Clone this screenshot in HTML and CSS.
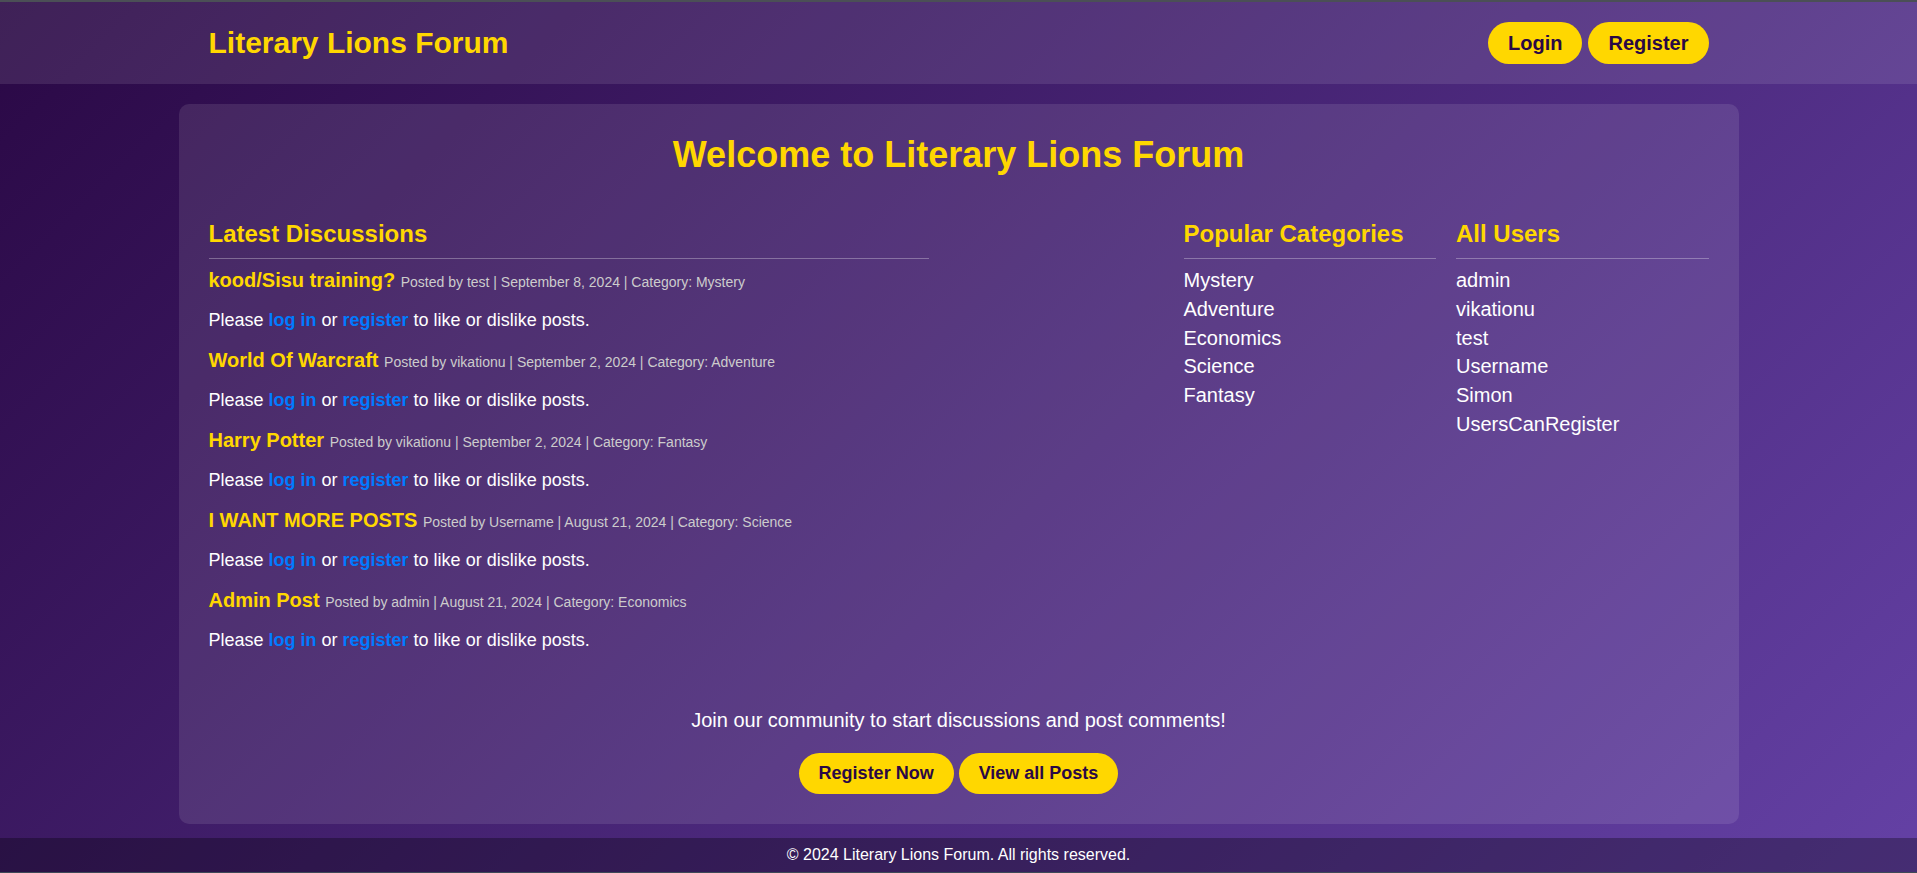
FILE: index.html
```html
<!DOCTYPE html>
<html lang="en">
<head>
<meta charset="utf-8">
<title>Literary Lions Forum</title>
<link rel="stylesheet" href="styles.css">
</head>
<body>
<header class="site-header">
  <div class="header-inner">
    <h1 class="logo">Literary Lions Forum</h1>
    <nav class="auth">
      <a class="btn btn-header" href="#">Login</a>
      <a class="btn btn-header" href="#">Register</a>
    </nav>
  </div>
</header>

<main class="card">
  <h1 class="welcome">Welcome to Literary Lions Forum</h1>

  <div class="columns">
    <section class="latest">
      <h2 class="section-title">Latest Discussions</h2>

      <div class="post">
        <h3 class="post-title">kood/Sisu training? <span class="meta">Posted by test | September 8, 2024 | Category: Mystery</span></h3>
        <p class="post-note">Please <a href="#">log in</a> or <a href="#">register</a> to like or dislike posts.</p>
      </div>
      <div class="post">
        <h3 class="post-title">World Of Warcraft <span class="meta">Posted by vikationu | September 2, 2024 | Category: Adventure</span></h3>
        <p class="post-note">Please <a href="#">log in</a> or <a href="#">register</a> to like or dislike posts.</p>
      </div>
      <div class="post">
        <h3 class="post-title">Harry Potter <span class="meta">Posted by vikationu | September 2, 2024 | Category: Fantasy</span></h3>
        <p class="post-note">Please <a href="#">log in</a> or <a href="#">register</a> to like or dislike posts.</p>
      </div>
      <div class="post">
        <h3 class="post-title">I WANT MORE POSTS <span class="meta">Posted by Username | August 21, 2024 | Category: Science</span></h3>
        <p class="post-note">Please <a href="#">log in</a> or <a href="#">register</a> to like or dislike posts.</p>
      </div>
      <div class="post">
        <h3 class="post-title">Admin Post <span class="meta">Posted by admin | August 21, 2024 | Category: Economics</span></h3>
        <p class="post-note">Please <a href="#">log in</a> or <a href="#">register</a> to like or dislike posts.</p>
      </div>
    </section>

    <div class="sidebar">
      <section class="side-col">
        <h2 class="section-title">Popular Categories</h2>
        <ul class="plain-list">
          <li>Mystery</li>
          <li>Adventure</li>
          <li>Economics</li>
          <li>Science</li>
          <li>Fantasy</li>
        </ul>
      </section>
      <section class="side-col">
        <h2 class="section-title">All Users</h2>
        <ul class="plain-list">
          <li>admin</li>
          <li>vikationu</li>
          <li>test</li>
          <li>Username</li>
          <li>Simon</li>
          <li>UsersCanRegister</li>
        </ul>
      </section>
    </div>
  </div>

  <div class="cta">
    <p class="cta-text">Join our community to start discussions and post comments!</p>
    <div class="cta-buttons">
      <a class="btn btn-cta" href="#">Register Now</a>
      <a class="btn btn-cta" href="#">View all Posts</a>
    </div>
  </div>
</main>

<footer class="site-footer">
  <p>&copy; 2024 Literary Lions Forum. All rights reserved.</p>
</footer>
</body>
</html>
```

FILE: styles.css
```css
* {
  box-sizing: border-box;
}

html {
  background: #4b4f56;
}

body {
  margin: 0;
  border-top: 2px solid #4b4f56;
  min-height: 100vh;
  font-family: "Liberation Sans", Arial, sans-serif;
  color: #ffffff;
  background: linear-gradient(135deg, #2a0845 0%, #6441a5 100%);
}

a {
  text-decoration: none;
}

/* Header */
.site-header {
  background: rgba(255, 255, 255, 0.1);
  padding: 20px 0;
}

.header-inner {
  max-width: 1500px;
  margin: 0 auto;
  display: flex;
  justify-content: space-between;
  align-items: center;
}

.logo {
  margin: 0;
  font-size: 30px;
  font-weight: bold;
  color: #ffd700;
}

.auth {
  display: flex;
  gap: 6px;
}

.btn {
  display: inline-block;
  background: #ffd700;
  color: #2a0845;
  font-weight: bold;
  border-radius: 25px;
  line-height: normal;
}

.btn-header {
  font-size: 20px;
  padding: 9.5px 20px;
}

.btn-cta {
  font-size: 18px;
  padding: 9.8px 20px;
}

/* Main card */
.card {
  max-width: 1560px;
  margin: 20px auto 14px;
  padding: 30px;
  background: rgba(255, 255, 255, 0.1);
  border-radius: 10px;
}

.welcome {
  margin: 0 0 44px;
  text-align: center;
  font-size: 36px;
  color: #ffd700;
}

.columns {
  display: flex;
  justify-content: space-between;
  align-items: flex-start;
}

.latest {
  width: 48%;
}

.sidebar {
  width: 35%;
  display: flex;
  gap: 20px;
}

.side-col {
  flex: 1;
}

.section-title {
  margin: 0 0 10px;
  padding-bottom: 10px;
  border-bottom: 1px solid rgba(255, 255, 255, 0.3);
  font-size: 24px;
  color: #ffd700;
}

.post + .post {
  margin-top: 18px;
}

.post-title {
  margin: 0;
  font-size: 20px;
  color: #ffd700;
}

.meta {
  font-size: 14px;
  font-weight: normal;
  color: #cccccc;
}

.post-note {
  margin: 18px 0 0;
  font-size: 18px;
  color: #ffffff;
}

.post-note a {
  color: #007bff;
  font-weight: bold;
}

.plain-list {
  list-style: none;
  margin: 0;
  padding: 0;
}

.plain-list li {
  font-size: 20px;
  margin-bottom: 5.75px;
}

/* Call to action */
.cta {
  margin-top: 58px;
  text-align: center;
}

.cta-text {
  margin: 0 0 21px;
  font-size: 20px;
}

.cta-buttons {
  display: flex;
  justify-content: center;
  gap: 5px;
}

/* Footer */
.site-footer {
  background: rgba(0, 0, 0, 0.3);
  padding: 8px 0;
  border-bottom: 1px solid #3e4a58;
  text-align: center;
}

.site-footer p {
  margin: 0;
  font-size: 16px;
}
```
